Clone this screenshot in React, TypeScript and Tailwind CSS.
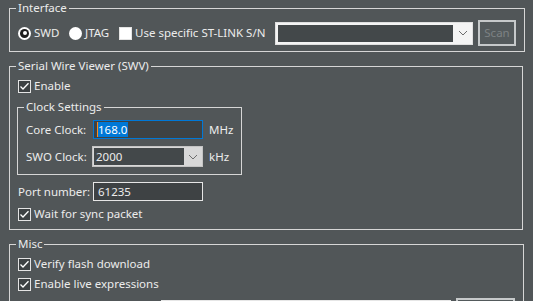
import React from "react";

const Check = ({ checked }: { checked: boolean }) =>
  checked ? (
    <span className="w-[13px] h-[13px] shrink-0 border border-[#e4e4e4] bg-[#3d4143] flex items-center justify-center">
      <svg width="11" height="11" viewBox="0 0 11 11">
        <polyline points="1.5,5.5 4,8 9.5,2.2" fill="none" stroke="#ffffff" strokeWidth="1.3" />
      </svg>
    </span>
  ) : (
    <span className="w-[13px] h-[13px] shrink-0 border border-[#e4e4e4] bg-white" />
  );

const Chevron = () => (
  <svg width="10" height="6" viewBox="0 0 10 6">
    <polyline points="1,1 5,5 9,1" fill="none" stroke="#6d6d6d" strokeWidth="1" />
  </svg>
);

const CheckRow = ({ label, checked = true }: { label: string; checked?: boolean }) => (
  <div className="h-[20px] flex items-center">
    <Check checked={checked} />
    <span className="ml-[3px] whitespace-nowrap">{label}</span>
  </div>
);

export default function App() {
  return (
    <div
      className="w-[533px] h-[301px] overflow-hidden bg-[#515658] text-[#ececec] text-[11.5px] leading-[16px]"
      style={{ fontFamily: '"Noto Sans", sans-serif' }}
    >
      {/* Interface */}
      <fieldset className="ml-[9px] w-[514px] border border-[#d6d6d6] px-[8px] pt-[4px] pb-[5px]">
        <legend className="ml-[-2px] px-[2px]">Interface</legend>
        <div className="h-[26px] flex items-center">
          <div className="w-[51px] flex items-center">
            <span className="w-[13px] h-[13px] rounded-full bg-white flex items-center justify-center">
              <span className="w-[9px] h-[9px] rounded-full bg-[#1e1e1e] flex items-center justify-center">
                <span className="w-[4px] h-[4px] rounded-full bg-white" />
              </span>
            </span>
            <span className="ml-[3px]">SWD</span>
          </div>
          <div className="w-[50px] flex items-center">
            <span className="w-[13px] h-[13px] rounded-full bg-white" />
            <span className="ml-[3px]">JTAG</span>
          </div>
          <div className="w-[156px] flex items-center">
            <Check checked={false} />
            <span className="ml-[3px] whitespace-nowrap">Use specific ST-LINK S/N</span>
          </div>
          <div className="w-[198px] h-[23px] bg-[#f4f4f4] border border-[#e0e0e0] pl-[2px] py-[2px] flex">
            <div className="flex-1 bg-[#43484a]" />
            <div className="w-[19px] flex items-center justify-center">
              <Chevron />
            </div>
          </div>
          <div className="ml-[5px] w-[38px] h-[26px] border-2 border-[#c6c9ca] bg-[#545a5c] text-[#7d8284] flex items-center justify-center">
            Scan
          </div>
        </div>
      </fieldset>

      {/* SWV */}
      <fieldset className="mt-[6px] ml-[9px] w-[514px] border border-[#d6d6d6] px-[8px] pt-[2px] pb-[5px]">
        <legend className="ml-[-2px] px-[2px]">Serial Wire Viewer (SWV)</legend>
        <CheckRow label="Enable" />
        <fieldset className="mt-[3px] ml-[-1px] w-[225px] border border-[#d6d6d6] px-[8px] pt-[5px] pb-[7px]">
          <legend className="ml-[-2px] px-[2px]">Clock Settings</legend>
          <div className="h-[19px] flex items-center">
            <span className="w-[67px] whitespace-nowrap">Core Clock:</span>
            <div className="w-[110px] h-[19px] border border-[#0078d7] bg-[#3e4244] flex items-center pl-[3px]">
              <span className="w-[1px] h-[15px] bg-[#ff8c1a]" />
              <span className="bg-[#0078d7] text-white h-[15px] leading-[15px] pr-[1px]">168.0</span>
            </div>
            <span className="ml-[6px]">MHz</span>
          </div>
          <div className="mt-[7px] h-[21px] flex items-center">
            <span className="w-[66px] whitespace-nowrap">SWO Clock:</span>
            <div className="w-[111px] h-[21px] bg-[#d8d8d8] border border-[#c4c4c4] p-[1px] flex">
              <div className="flex-1 bg-[#43484a] flex items-center pl-[2px]">2000</div>
              <div className="w-[17px] flex items-center justify-center">
                <Chevron />
              </div>
            </div>
            <span className="ml-[6px]">kHz</span>
          </div>
        </fieldset>
        <div className="mt-[7px] h-[19px] flex items-center">
          <span className="w-[75px] shrink-0 whitespace-nowrap">Port number:</span>
          <div className="w-[110px] h-[19px] border border-[#e6e6e6] bg-[#3e4244] flex items-center pl-[4px]">61235</div>
        </div>
        <div className="mt-[3px]">
          <CheckRow label="Wait for sync packet" />
        </div>
      </fieldset>

      {/* Misc */}
      <fieldset className="mt-[6px] ml-[9px] w-[514px] border border-[#d6d6d6] px-[8px] pt-[2px] pb-[8px]">
        <legend className="ml-[-2px] px-[2px]">Misc</legend>
        <CheckRow label="Verify flash download" />
        <CheckRow label="Enable live expressions" />
        <div className="mt-[4px] h-[24px] flex items-start">
          <div className="w-[143px] h-[24px]" />
          <div className="mt-[2px] w-[290px] h-[20px] border border-[#e6e6e6] bg-[#3e4244]" />
          <div className="ml-[5px] w-[59px] h-[24px] border-2 border-[#c6c9ca] bg-[#545a5c]" />
        </div>
      </fieldset>
    </div>
  );
}
